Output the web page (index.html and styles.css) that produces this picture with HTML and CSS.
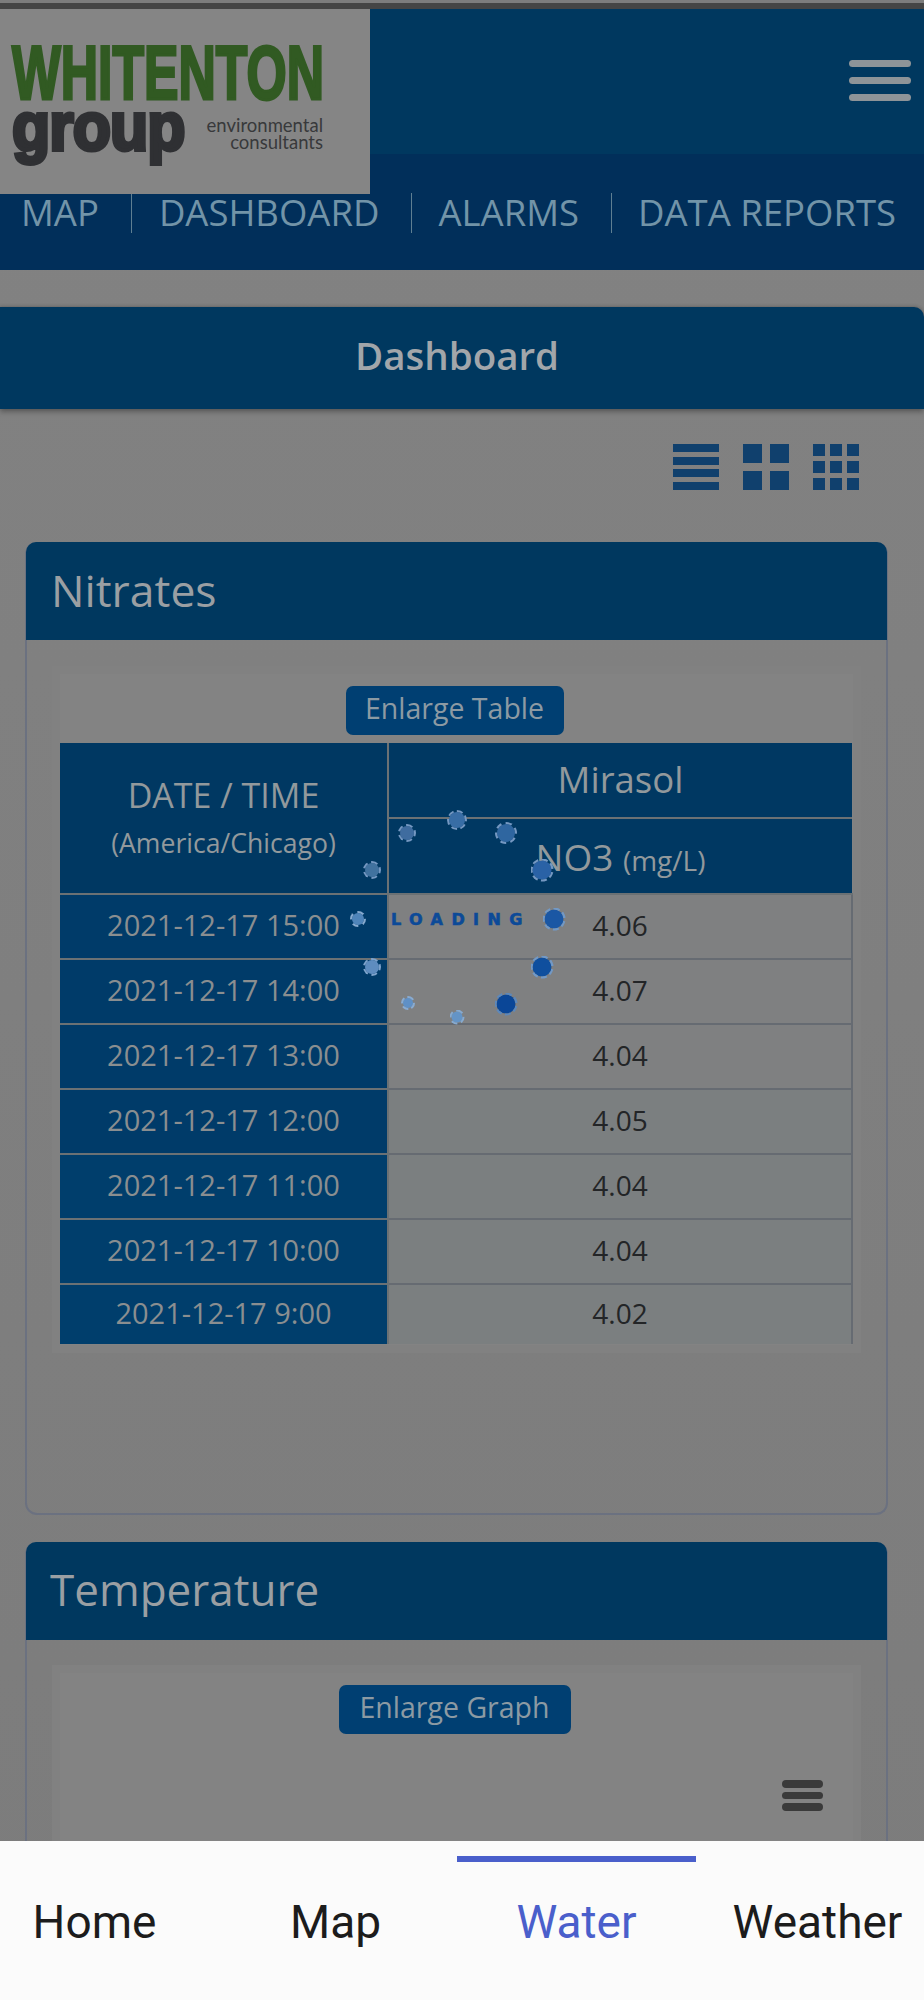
FILE: index.html
```html
<!DOCTYPE html>
<html lang="en">
<head>
<meta charset="utf-8">
<title>Dashboard</title>
<link rel="stylesheet" href="styles.css">
</head>
<body>
<div class="phone">
  <div class="topstrip"></div>
  <header class="header">
    <div class="logo">
      <div class="logo-top">WHITENTON</div>
      <div class="logo-bottom">
        <span class="logo-group">group</span>
        <span class="logo-sub">environmental<br>consultants</span>
      </div>
    </div>
    <div class="burger"><i></i><i></i><i></i></div>
  </header>
  <nav class="nav">
    <a class="nav-link nav-map">MAP</a>
    <a class="nav-link nav-dash">DASHBOARD</a>
    <a class="nav-link nav-alarm">ALARMS</a>
    <a class="nav-link nav-data">DATA REPORTS</a>
  </nav>
  <h1 class="title">Dashboard</h1>
  <div class="views">
    <svg class="view" viewBox="0 0 46 46"><path d="M0 0h46v8H0zM0 13h46v8H0zM0 25h46v8H0zM0 38h46v8H0z"/></svg>
    <svg class="view" viewBox="0 0 46 46"><path d="M0 0h19v19H0zM27 0h19v19H27zM0 27h19v19H0zM27 27h19v19H27z"/></svg>
    <svg class="view" viewBox="0 0 46 46"><path d="M0 0h12v12H0zM17 0h12v12H17zM34 0h12v12H34zM0 17h12v12H0zM17 17h12v12H17zM34 17h12v12H34zM0 34h12v12H0zM17 34h12v12H17zM34 34h12v12H34z"/></svg>
  </div>

  <section class="card card-nitrates">
    <h2 class="card-head">Nitrates</h2>
    <div class="panel panel-table">
      <div class="btn-row"><button class="btn btn-table">Enlarge Table</button></div>
      <table class="data">
        <thead>
          <tr><th rowspan="2" class="date-head">DATE / TIME<small>(America/Chicago)</small></th><th class="site">Mirasol</th></tr>
          <tr><th class="param">NO3 <span>(mg/L)</span></th></tr>
        </thead>
        <tbody>
          <tr><th>2021-12-17 15:00</th><td>4.06</td></tr>
          <tr><th>2021-12-17 14:00</th><td>4.07</td></tr>
          <tr><th>2021-12-17 13:00</th><td>4.04</td></tr>
          <tr><th>2021-12-17 12:00</th><td>4.05</td></tr>
          <tr><th>2021-12-17 11:00</th><td>4.04</td></tr>
          <tr><th>2021-12-17 10:00</th><td>4.04</td></tr>
          <tr class="last"><th>2021-12-17 9:00</th><td>4.02</td></tr>
        </tbody>
      </table>
    </div>
  </section>

  <section class="card card-temp">
    <h2 class="card-head">Temperature</h2>
    <div class="panel panel-graph">
      <div class="btn-row"><button class="btn btn-graph">Enlarge Graph</button></div>
      <div class="chart-menu"><i></i><i></i><i></i></div>
    </div>
  </section>

  <div class="loader">
    <span class="dot d1"></span><span class="dot d2"></span><span class="dot d3"></span><span class="dot d4"></span>
    <span class="dot d5"></span><span class="dot d6"></span><span class="dot d7"></span><span class="dot d8"></span>
    <span class="dot d9"></span><span class="dot d10"></span><span class="dot d11"></span><span class="dot d12"></span>
    <span class="loading">LOADING</span>
  </div>

  <div class="tabs">
    <a class="tab">Home</a>
    <a class="tab">Map</a>
    <a class="tab active">Water</a>
    <a class="tab">Weather</a>
  </div>
</div>
</body>
</html>
```
FILE: styles.css
```css
* { box-sizing: border-box; }
html, body { margin: 0; padding: 0; }
body { background: #808080; font-family: "Open Sans", "Liberation Sans", sans-serif; }
.phone { position: relative; width: 924px; height: 2000px; overflow: hidden; background: linear-gradient(#828282, #7c7c7c); }

.topstrip { height: 9px; border-top: 3px solid #7d7d7d; background: #454545; }

.header { height: 145px; background: #00385f; position: relative; display: flex; justify-content: flex-end; align-items: flex-start; padding: 51px 13px 0 0; }
.logo { position: absolute; left: 0; top: 0; width: 370px; height: 185px; background: #858585; z-index: 2; overflow: hidden; padding: 34px 0 0 12px; }
.logo-top { font-family: "Liberation Sans", sans-serif; font-weight: 700; font-size: 76px; line-height: 60px; height: 60px; color: #315a22; -webkit-text-stroke: 3px #315a22; white-space: nowrap; transform: scaleX(0.68); transform-origin: left top; }
.logo-bottom { display: flex; width: 311px; justify-content: space-between; }
.logo-group { font-family: "Liberation Sans", sans-serif; font-weight: 700; font-size: 68px; line-height: 46px; height: 60px; width: 172px; color: #2f3033; -webkit-text-stroke: 4px #2f3033; transform: scaleX(0.92); transform-origin: left top; white-space: nowrap; letter-spacing: -1px; }
.logo-sub { font-family: "Lato", sans-serif; font-size: 18.5px; line-height: 17px; color: #38393b; text-align: right; padding-top: 14px; }
.burger { display: flex; flex-direction: column; gap: 10px; }
.burger i { display: block; width: 62px; height: 7px; border-radius: 4px; background: #8e9498; }

.nav { height: 116px; background: #012f5a; display: flex; align-items: flex-start; padding-top: 39px; position: relative; }
.nav-link { font-size: 36.5px; line-height: 38px; font-weight: 400; color: #7294a8; white-space: nowrap; height: 40px; }
.nav-map { margin-left: 21px; padding-right: 32px; border-right: 1px solid #5f7f92; }
.nav-dash { padding: 0 32px 0 27px; border-right: 1px solid #5f7f92; }
.nav-alarm { padding: 0 32px 0 26px; border-right: 1px solid #5f7f92; }
.nav-data { padding-left: 26px; }

.title { margin: 37px 0 0; height: 102px; background: #00385f; border-radius: 0 10px 0 0; color: #a2a6aa; font-size: 38.5px; font-weight: 600; line-height: 96px; text-align: center; padding-right: 10px; box-shadow: 0 3px 5px rgba(60,60,60,.55), 0 -1px 3px rgba(60,60,60,.3); }

.views { display: flex; justify-content: flex-end; gap: 24px; padding: 35px 65px 0 0; height: 133px; }
.view { width: 46px; height: 46px; fill: #10406d; }

.card { margin: 0 36px 0 25px; border: 2px solid #6b7180; border-top: 0; border-radius: 12px; position: relative; }
.card-nitrates { height: 973px; }
.card-temp { margin-top: 27px; height: 460px; }
.card-head { margin: 0 -1px; height: 98px; background: #00385f; border-radius: 10px 10px 0 0; color: #9a9fa3; font-size: 44.5px; font-weight: 400; line-height: 95px; padding-left: 25px; }
.card-temp .card-head { padding-left: 24px; font-size: 44px; }

.panel { margin: 26px 25px 0 25px; border: 8px solid #818181; background: #838383; }
.panel-table { height: 687px; }
.panel-graph { height: 400px; margin-top: 25px; }
.btn-row { display: flex; justify-content: center; height: 69px; padding: 12px 0 0; }
.btn { height: 49px; border: 0; border-radius: 7px; background: #003f72; color: #8c9aa3; font-family: "Open Sans", sans-serif; font-size: 28.5px; font-weight: 400; padding: 0 0 5px; }
.btn-table { width: 218px; margin-left: -4px; }
.btn-graph { width: 232px; margin-left: -4px; }

.data { width: 793px; table-layout: fixed; border-collapse: collapse; color: #8f9192; }
.data th, .data td { padding: 0; font-weight: 400; text-align: center; }
.data thead th { background: #003862; color: #92999c; border-bottom: 2px solid #6b7174; }
.date-head { width: 328px; height: 151px; font-size: 34px; line-height: 40px; border-right: 2px solid #6b7174; }
.date-head small { display: block; font-size: 26.6px; line-height: 38px; margin-top: 9px; }
.site { height: 75px; font-size: 36.5px; padding-bottom: 2px !important; }
.param { height: 76px; font-size: 37px; }
.param span { font-size: 28px; }
.data tbody tr { height: 65px; }
.data tbody th { background: #003b69; font-size: 29px; color: #8a8e90; border-right: 2px solid #6b7174; border-bottom: 2px solid #6b7174; padding-bottom: 4px; }
.data tbody td { background: #7f8081; color: #232527; font-size: 28px; border-bottom: 2px solid #666b72; border-right: 2px solid #666b72; padding-bottom: 4px; }
.data tbody tr:nth-child(n+4) td { background: #7b7f80; }
.data tbody tr:nth-child(n+5) th { background: #003e6c; }
.data tbody .last { height: 60px; }
.data tbody .last th { border-bottom: 0; }
.data tbody .last td { border-bottom: 0; }

.chart-menu { display: flex; flex-direction: column; gap: 4px; width: 41px; margin: 38px 30px 0 auto; }
.chart-menu i { display: block; height: 7.5px; border-radius: 4px; background: #3a3a3a; }

.loader { position: absolute; left: 0; top: 0; width: 924px; height: 1100px; pointer-events: none; }
.dot { position: absolute; border-radius: 50%; border: 2px dashed #7598c2; background: #2f68a8; background-clip: padding-box; transform: translate(-50%, -50%); }
.d1 { left: 407px; top: 833px; width: 18px; height: 18px; background-color: #3f6c9f; }
.d2 { left: 457px; top: 820px; width: 20px; height: 20px; background-color: #386da5; }
.d3 { left: 506px; top: 833px; width: 22px; height: 22px; background-color: #2f66a0; }
.d4 { left: 542px; top: 870px; width: 23px; height: 23px; background-color: #2a62a6; }
.d5 { left: 554px; top: 919px; width: 23px; height: 23px; background-color: #1a57a4; border-color: #7299c6; }
.d6 { left: 542px; top: 967px; width: 23px; height: 23px; background-color: #0f4f9e; border-color: #7299c6; }
.d7 { left: 506px; top: 1004px; width: 23px; height: 23px; background-color: #0a4697; border-color: #5d88bb; }
.d8 { left: 457px; top: 1017px; width: 15px; height: 15px; background-color: #6494c6; border-color: #86aad0; }
.d9 { left: 408px; top: 1003px; width: 14px; height: 14px; background-color: #5f90c6; border-color: #88abd2; }
.d10 { left: 372px; top: 967px; width: 18px; height: 18px; background-color: #5e8cbf; border-color: #7ea3cc; }
.d11 { left: 358px; top: 919px; width: 16px; height: 16px; background-color: #4f84b9; border-color: #86a9ce; }
.d12 { left: 372px; top: 870px; width: 18px; height: 18px; background-color: #41729f; }
.loading { position: absolute; left: 391px; top: 911px; font-family: "DejaVu Sans", sans-serif; font-weight: 700; font-size: 16px; line-height: 18px; letter-spacing: 8.4px; color: #0c4a98; -webkit-text-stroke: 0.6px #0c4a98; white-space: nowrap; }

.tabs { position: absolute; left: 0; top: 1841px; width: 924px; height: 159px; background: #fbfbfb; display: flex; padding: 15px 0 0 0; }
.tab { flex: none; width: 241px; height: 130px; border-top: 6px solid transparent; color: #1c1c1c; font-family: "Roboto", sans-serif; font-size: 46px; line-height: 120px; text-align: center; white-space: nowrap; }
.tab:first-child { margin-left: -26px; }
.tab.active { width: 239px; margin: 0 1px; color: #4a5fcb; border-top-color: #4a5fcb; }
```
